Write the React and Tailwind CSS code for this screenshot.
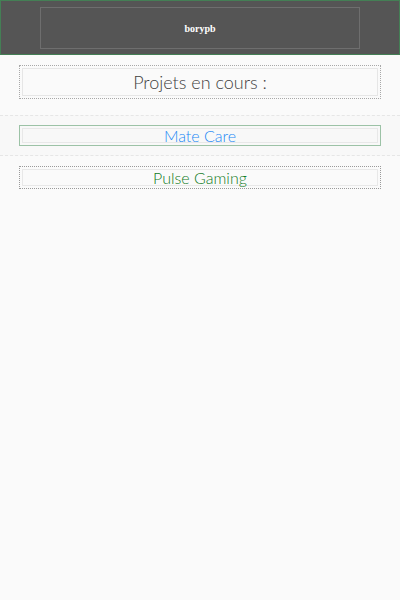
import React from 'react'

const projects = [
  { name: 'Mate Care', color: 'text-[#2388f5]', active: true },
  { name: 'Pulse Gaming', color: 'text-[#117a24]', active: false },
]

export default function App() {
  return (
    <div className="min-h-[600px] w-[400px] bg-[#fafafa] font-['Lato','Open_Sans',sans-serif]">
      {/* header */}
      <header className="h-[55px] border border-[#447f55] bg-[#555555] pt-[6px]">
        <div className="mx-auto flex h-[42px] w-[320px] items-center justify-center border border-solid border-[#6e6e6e]">
          <span className="font-['Liberation_Serif',serif] text-[10px] font-bold text-white">borypb</span>
        </div>
      </header>

      <div className="px-[19px] pt-[10px]">
        <div className="border border-dotted border-[#a8a8a8] p-[2px]">
          <h1 className="flex h-[28px] items-center justify-center border border-[#e6e6e6] text-[18px] font-light text-[#3f3f3f]">
            Projets en cours :
          </h1>
        </div>
      </div>

      {/* project list */}
      <ul className="mt-[16px]">
        {projects.map((p) =>
          p.active ? (
            <li key={p.name} className="border-y border-dashed border-[#e6e6e6] bg-[#f8f8f8] px-[19px] py-[9px]">
              <div className="border border-[#9cc2a6] p-[2px]">
                <div className={`flex h-[15px] items-center justify-center border border-[#e8e8e8] text-[16px] font-light ${p.color}`}>
                  {p.name}
                </div>
              </div>
            </li>
          ) : (
            <li key={p.name} className="px-[19px] pt-[10px]">
              <div className="border border-dotted border-[#9a9a9a] p-[2px]">
                <div className={`flex h-[17px] items-center justify-center border border-[#e8e8e8] text-[16px] font-light ${p.color}`}>
                  {p.name}
                </div>
              </div>
            </li>
          )
        )}
      </ul>
    </div>
  )
}
